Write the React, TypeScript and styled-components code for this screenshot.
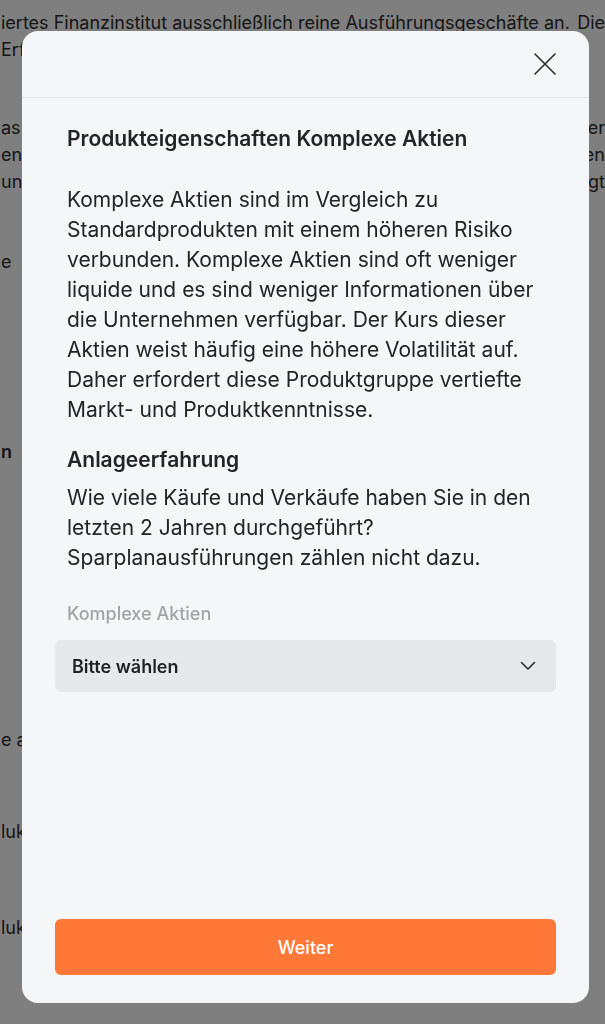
import styled, { createGlobalStyle } from "styled-components";

const GlobalStyle = createGlobalStyle`
  html, body {
    margin: 0;
    padding: 0;
    background: #ffffff;
    font-family: Inter, "Noto Sans", "Liberation Sans", sans-serif;
  }
  * {
    box-sizing: border-box;
  }
`;

const Page = styled.div`
  height: 1024px;
  overflow: hidden;
  padding: 9px 0 0 1px;
  display: flex;
  flex-direction: column;
  color: #2c2d31;
  font-size: 18px;
  line-height: 27px;
`;

const PageLine = styled.div<{ $mt?: number; $bold?: boolean }>`
  margin-top: ${({ $mt }) => $mt ?? 0}px;
  display: flex;
  justify-content: space-between;
  white-space: nowrap;
  font-weight: ${({ $bold }) => ($bold ? 600 : 400)};
`;

const Overlay = styled.div`
  position: fixed;
  inset: 0;
  background: rgba(0, 0, 0, 0.5);
  padding: 31px 16px 21px 22px;
  display: flex;
`;

const Modal = styled.div`
  flex: 1;
  display: flex;
  flex-direction: column;
  background: #f5f6f8;
  border-radius: 16px;
  overflow: hidden;
`;

const Header = styled.div`
  height: 67px;
  display: flex;
  align-items: center;
  justify-content: flex-end;
  padding: 0 32px 0 0;
  border-bottom: 1px solid #e3e4e7;
`;

const CloseButton = styled.button`
  border: 0;
  background: none;
  padding: 0;
  width: 24px;
  height: 24px;
  display: flex;
  align-items: center;
  justify-content: center;
  color: #2a2b2e;
  cursor: pointer;
`;

const Body = styled.div`
  flex: 1;
  display: flex;
  flex-direction: column;
  padding: 27px 33px 28px;
`;

const TextBlock = styled.div`
  padding: 0 12px;
  color: #232428;
`;

const Title = styled.h2<{ $mt?: number }>`
  margin: ${({ $mt }) => $mt ?? 0}px 0 0;
  font-size: 21px;
  line-height: 28px;
  font-weight: 600;
`;

const Text = styled.p<{ $mt?: number }>`
  margin: ${({ $mt }) => $mt ?? 0}px 0 0;
  font-size: 21px;
  line-height: 30px;
  font-weight: 400;
`;

const Label = styled.div`
  margin-top: 29px;
  padding: 0 12px;
  font-size: 18px;
  line-height: 24px;
  font-weight: 500;
  color: #a3a4a8;
`;

const Select = styled.div`
  margin-top: 14px;
  height: 52px;
  border-radius: 6px;
  background: #e7e8eb;
  display: flex;
  align-items: center;
  justify-content: space-between;
  padding: 0 20px 0 17px;
  font-size: 18px;
  font-weight: 600;
  color: #1f2024;
`;

const Spacer = styled.div`
  flex: 1;
`;

const PrimaryButton = styled.button`
  height: 56px;
  border: 0;
  border-radius: 6px;
  background: #ff7838;
  color: #ffffff;
  font-family: inherit;
  font-size: 18px;
  font-weight: 500;
  cursor: pointer;
`;

const pageLines: { left: string; right?: string; mt?: number; bold?: boolean }[] = [
  { left: "iertes Finanzinstitut ausschließlich reine Ausführungsgeschäfte an.", right: "Die" },
  { left: "Erfahrungen werden nicht geprüft." },
  { left: "as Wertpapierhandelsgesetz verpflichtet uns", right: "der", mt: 51 },
  { left: "en Kenntnisse und Erfahrungen", right: "en" },
  { left: "ung der Angemessenheit", right: "gt" },
  { left: "e", mt: 53 },
  { left: "n", mt: 163, bold: true },
  { left: "e a", mt: 261 },
  { left: "luk", mt: 65 },
  { left: "luk", mt: 69 },
];

export default function App() {
  return (
    <>
      <GlobalStyle />
      <Page>
        {pageLines.map((line, i) => (
          <PageLine key={i} $mt={line.mt} $bold={line.bold}>
            <span>{line.left}</span>
            {line.right && <span>{line.right}</span>}
          </PageLine>
        ))}
      </Page>
      <Overlay>
        <Modal>
          <Header>
            <CloseButton aria-label="Schließen">
              <svg width="24" height="24" viewBox="0 0 24 24" fill="none" stroke="currentColor" strokeWidth="1.6" strokeLinecap="round">
                <path d="M2 2 L22 22 M22 2 L2 22" />
              </svg>
            </CloseButton>
          </Header>
          <Body>
            <TextBlock>
              <Title>Produkteigenschaften Komplexe Aktien</Title>
              <Text $mt={32}>
                Komplexe Aktien sind im Vergleich zu Standardprodukten mit einem höheren Risiko
                verbunden. Komplexe Aktien sind oft weniger liquide und es sind weniger
                Informationen über die Unternehmen verfügbar. Der Kurs dieser Aktien weist
                häufig eine höhere Volatilität auf. Daher erfordert diese Produktgruppe
                vertiefte Markt- und Produktkenntnisse.
              </Text>
              <Title $mt={21}>Anlageerfahrung</Title>
              <Text $mt={9}>
                Wie viele Käufe und Verkäufe haben Sie in den letzten 2 Jahren durchgeführt?
                <br />
                Sparplanausführungen zählen nicht dazu.
              </Text>
            </TextBlock>
            <Label>Komplexe Aktien</Label>
            <Select>
              <span>Bitte wählen</span>
              <svg width="16" height="10" viewBox="0 0 16 10" fill="none" stroke="#2a2b2e" strokeWidth="1.6" strokeLinecap="round" strokeLinejoin="round">
                <path d="M1.5 1.5 L8 8 L14.5 1.5" />
              </svg>
            </Select>
            <Spacer />
            <PrimaryButton>Weiter</PrimaryButton>
          </Body>
        </Modal>
      </Overlay>
    </>
  );
}
